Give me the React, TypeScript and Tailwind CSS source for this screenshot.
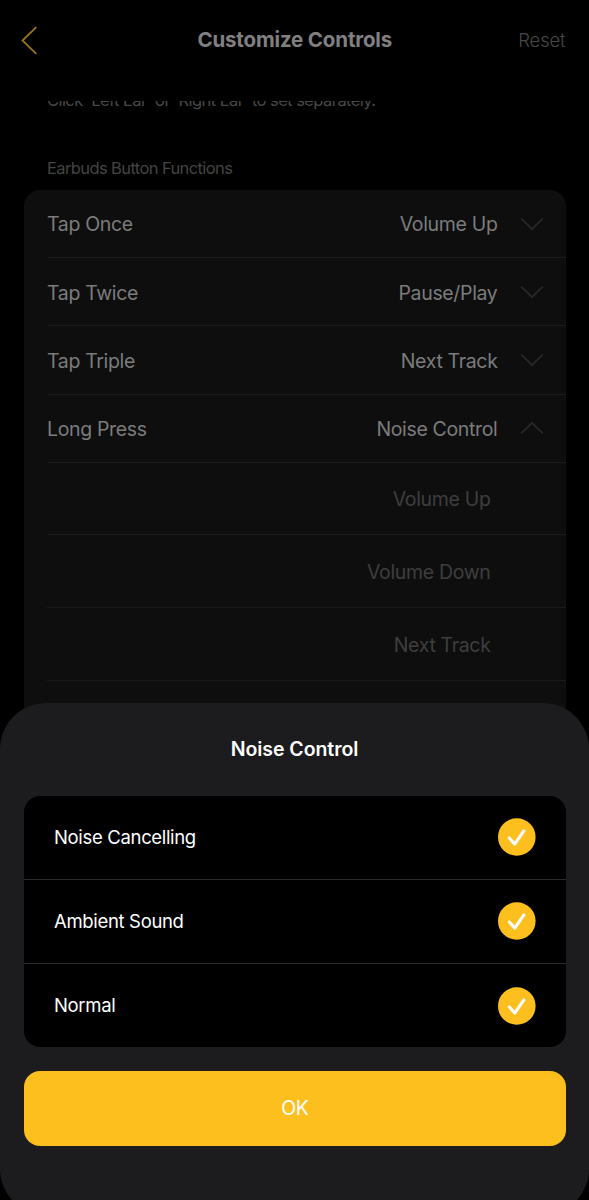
import React from "react";

type Assignment = { gesture: string; action: string; open?: boolean };

const assignments: Assignment[] = [
  { gesture: "Tap Once", action: "Volume Up" },
  { gesture: "Tap Twice", action: "Pause/Play" },
  { gesture: "Tap Triple", action: "Next Track" },
  { gesture: "Long Press", action: "Noise Control", open: true },
];

const choices = ["Volume Up", "Volume Down", "Next Track"];
const modes = ["Noise Cancelling", "Ambient Sound", "Normal"];

function Chevron({ open }: { open?: boolean }) {
  return (
    <svg width="24" height="14" viewBox="0 0 24 14" fill="none" stroke="#292929" strokeWidth="1.8">
      <path d={open ? "M1.3 12.3 12 1.9 22.7 12.3" : "M1.3 1.7 12 12.1 22.7 1.7"} />
    </svg>
  );
}

function CheckBadge() {
  return (
    <svg width="38" height="38" viewBox="0 0 38 38" fill="none">
      <circle cx="18.8" cy="19" r="18.8" fill="#fdbf1e" />
      <path d="M11.3 19.9 16.7 26.1 25.9 12.9" stroke="#fff" strokeWidth="3.1" strokeLinecap="round" strokeLinejoin="round" />
    </svg>
  );
}

export default function App() {
  return (
    <div className="relative h-[1200px] w-[589px] overflow-hidden bg-black font-['Inter',sans-serif]">
      <header className="grid h-[81px] grid-cols-[1fr_auto_1fr] items-center pr-[23.5px] pl-[20px]">
        <svg width="18" height="29" viewBox="0 0 18 29" fill="none" stroke="#99731a" strokeWidth="1.8">
          <path d="M16.3 1.2 2.5 14.5 16.3 27.8" />
        </svg>
        <h1 className="relative left-[2px] text-[20.5px] font-bold tracking-[-0.15px] text-[#808080]">Customize Controls</h1>
        <span className="justify-self-end text-[18.5px] font-light tracking-[-0.15px] text-[#484848]">Reset</span>
      </header>

      <main className="flex flex-col pt-5">
        <div className="ml-[47px] flex h-[10px] items-end [clip-path:inset(0_0_-6px_0)]">
          <p className="h-[21px] text-[16.5px] leading-[20px] tracking-[-0.56px] whitespace-nowrap text-[#484848]">
            Click 'Left Ear' or 'Right Ear' to set separately.
          </p>
        </div>
        <h2 className="mt-[46px] ml-[47px] h-[33px] text-[16.5px] leading-[23px] tracking-[-0.61px] text-[#444]">Earbuds Button Functions</h2>

        <section className="mx-6 h-[560px] w-[541.5px] rounded-2xl bg-[#0e0e0e] pl-[23px]">
          {assignments.map((item) => (
            <div key={item.gesture} className="flex h-[68.2px] items-center border-b border-[#1b1b1b] pr-[22px] text-[19.5px] tracking-[-0.34px] text-[#7c7c7c]">
              <span className="grow pt-[3px]">{item.gesture}</span>
              <span className="mr-[22px] pt-[3px]">{item.action}</span>
              <Chevron open={item.open} />
            </div>
          ))}
          {choices.map((choice) => (
            <div key={choice} className="flex h-[72.7px] items-center justify-end border-b border-[#1b1b1b] pt-[3px] pr-[75px] text-[19.5px] tracking-[-0.34px] text-[#3e3e3e]">
              {choice}
            </div>
          ))}
        </section>
      </main>

      <section role="dialog" aria-label="Noise Control" className="absolute top-[703px] left-0 flex h-[512px] w-full flex-col rounded-[46px] bg-[#1c1c1e] px-6">
        <h2 className="h-[92.5px] pt-[32px] text-center text-[19.5px] leading-[28px] font-semibold tracking-[-0.05px] text-white">Noise Control</h2>
        <ul className="h-[251.5px] w-[541.5px] divide-y divide-[#2b2b2d] rounded-2xl bg-black">
          {modes.map((mode) => (
            <li key={mode} className="flex h-[84px] items-center justify-between pr-[30px] pl-[30px] text-[18.5px] tracking-[-0.33px] text-white">
              <span className="pt-[1.5px]">{mode}</span>
              <CheckBadge />
            </li>
          ))}
        </ul>
        <button className="mt-[24px] h-[75px] w-[541.5px] rounded-2xl bg-[#fdbf1e] text-[19.5px] tracking-[-0.5px] text-white">OK</button>
      </section>
    </div>
  );
}
